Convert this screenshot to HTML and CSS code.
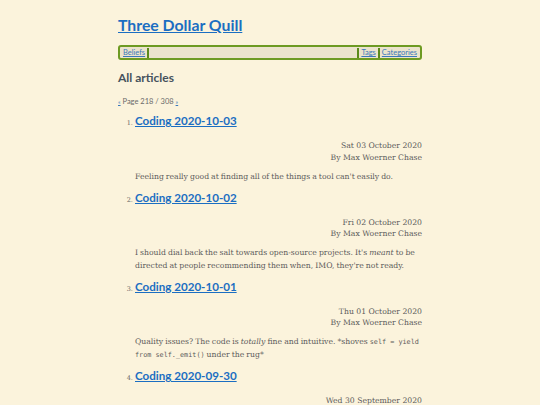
FILE: index.html
```html
<!DOCTYPE html>
<html>
<head>
<meta charset="utf-8">
<link rel="stylesheet" href="styles.css">
</head>
<body>
<div class="page">
  <header class="site-header">
    <h1 class="site-title"><a href="#">Three Dollar Quill</a></h1>
    <nav class="nav">
      <a href="#">Beliefs</a><span class="sep"></span>
      <span class="spacer"></span>
      <span class="sep"></span><a href="#">Tags</a><span class="sep"></span><a href="#">Categories</a>
    </nav>
  </header>
  <main>
    <h2 class="section-title">All articles</h2>
    <p class="pager"><a class="arrow" href="#">«</a> Page 218 / 308 <a class="arrow" href="#">»</a></p>
    <ol class="articles">
      <li class="article">
        <h3 class="article-title"><a href="#">Coding 2020-10-03</a></h3>
        <div class="meta"><div>Sat 03 October 2020</div><div>By Max Woerner Chase</div></div>
        <p class="summary">Feeling really good at finding all of the things a tool can't easily do.</p>
      </li>
      <li class="article">
        <h3 class="article-title"><a href="#">Coding 2020-10-02</a></h3>
        <div class="meta"><div>Fri 02 October 2020</div><div>By Max Woerner Chase</div></div>
        <p class="summary">I should dial back the salt towards open-source projects. It's <em>meant</em> to be directed at people recommending them when, IMO, they're not ready.</p>
      </li>
      <li class="article">
        <h3 class="article-title"><a href="#">Coding 2020-10-01</a></h3>
        <div class="meta"><div>Thu 01 October 2020</div><div>By Max Woerner Chase</div></div>
        <p class="summary">Quality issues? The code is <em>totally</em> fine and intuitive. *shoves <code>self = yield</code> <code>from self._emit()</code> under the rug*</p>
      </li>
      <li class="article">
        <h3 class="article-title"><a href="#">Coding 2020-09-30</a></h3>
        <div class="meta"><div>Wed 30 September 2020</div><div>By Max Woerner Chase</div></div>
        <p class="summary">More work on the tool.</p>
      </li>
    </ol>
  </main>
</div>
</body>
</html>
```
FILE: styles.css
```css
html, body {
  margin: 0;
  padding: 0;
  background: #fbf3dc;
}
body {
  font-family: "DejaVu Serif", "Liberation Serif", serif;
  color: #5b5b5b;
  font-size: 7.7px;
}
a { color: #1b6ec2; }
.page {
  width: 304px;
  margin: 0 auto;
  padding-top: 14px;
}
.site-title {
  font-family: "Lato", "Noto Sans", sans-serif;
  font-size: 15.8px;
  font-weight: 700;
  line-height: 22px;
  margin: 0 0 9px;
}
.site-title a { color: #1b6ec2; }
.nav {
  display: flex;
  align-items: center;
  height: 11px;
  border: 2px solid #6d9a22;
  border-radius: 3px;
  background: #ebe3cc;
  padding: 0 2px;
  font-family: "Lato", "Noto Sans", sans-serif;
  font-size: 7.5px;
}
.nav a { color: #3a78bb; padding: 0 1px; }
.sep {
  width: 2px;
  height: 10px;
  background: #5a8a1a;
  margin: 0 1px;
}
.spacer { flex: 1; }
.section-title {
  font-family: "Lato", "Noto Sans", sans-serif;
  font-size: 12px;
  font-weight: 700;
  color: #46525c;
  margin: 10px 0 0;
  line-height: 16px;
}
.pager {
  font-family: "Lato", "Noto Sans", sans-serif;
  font-size: 7.5px;
  color: #6a6a6a;
  margin: 11px 0 0;
  line-height: 10px;
}
.pager .arrow { color: #3a78bb; font-size: 6px; }
.articles {
  margin: 0;
  padding-left: 17px;
}
.article::marker {
  font-size: 6.5px;
  color: #666;
  font-family: "DejaVu Serif", serif;
}
.article-title {
  font-family: "Lato", "Noto Sans", sans-serif;
  font-size: 11.6px;
  font-weight: 700;
  margin: 0;
  line-height: 28px;
}
.article-title a { color: #1b6ec2; }
.meta {
  text-align: right;
  line-height: 11.5px;
  margin-top: 5px;
}
.summary {
  margin: 7.5px 0 1px;
  line-height: 12.3px;
  word-spacing: -0.4px;
}
.summary code {
  font-family: "DejaVu Sans Mono", "Liberation Mono", monospace;
  font-size: 6.8px;
  white-space: nowrap;
  word-spacing: 0;
}
```
